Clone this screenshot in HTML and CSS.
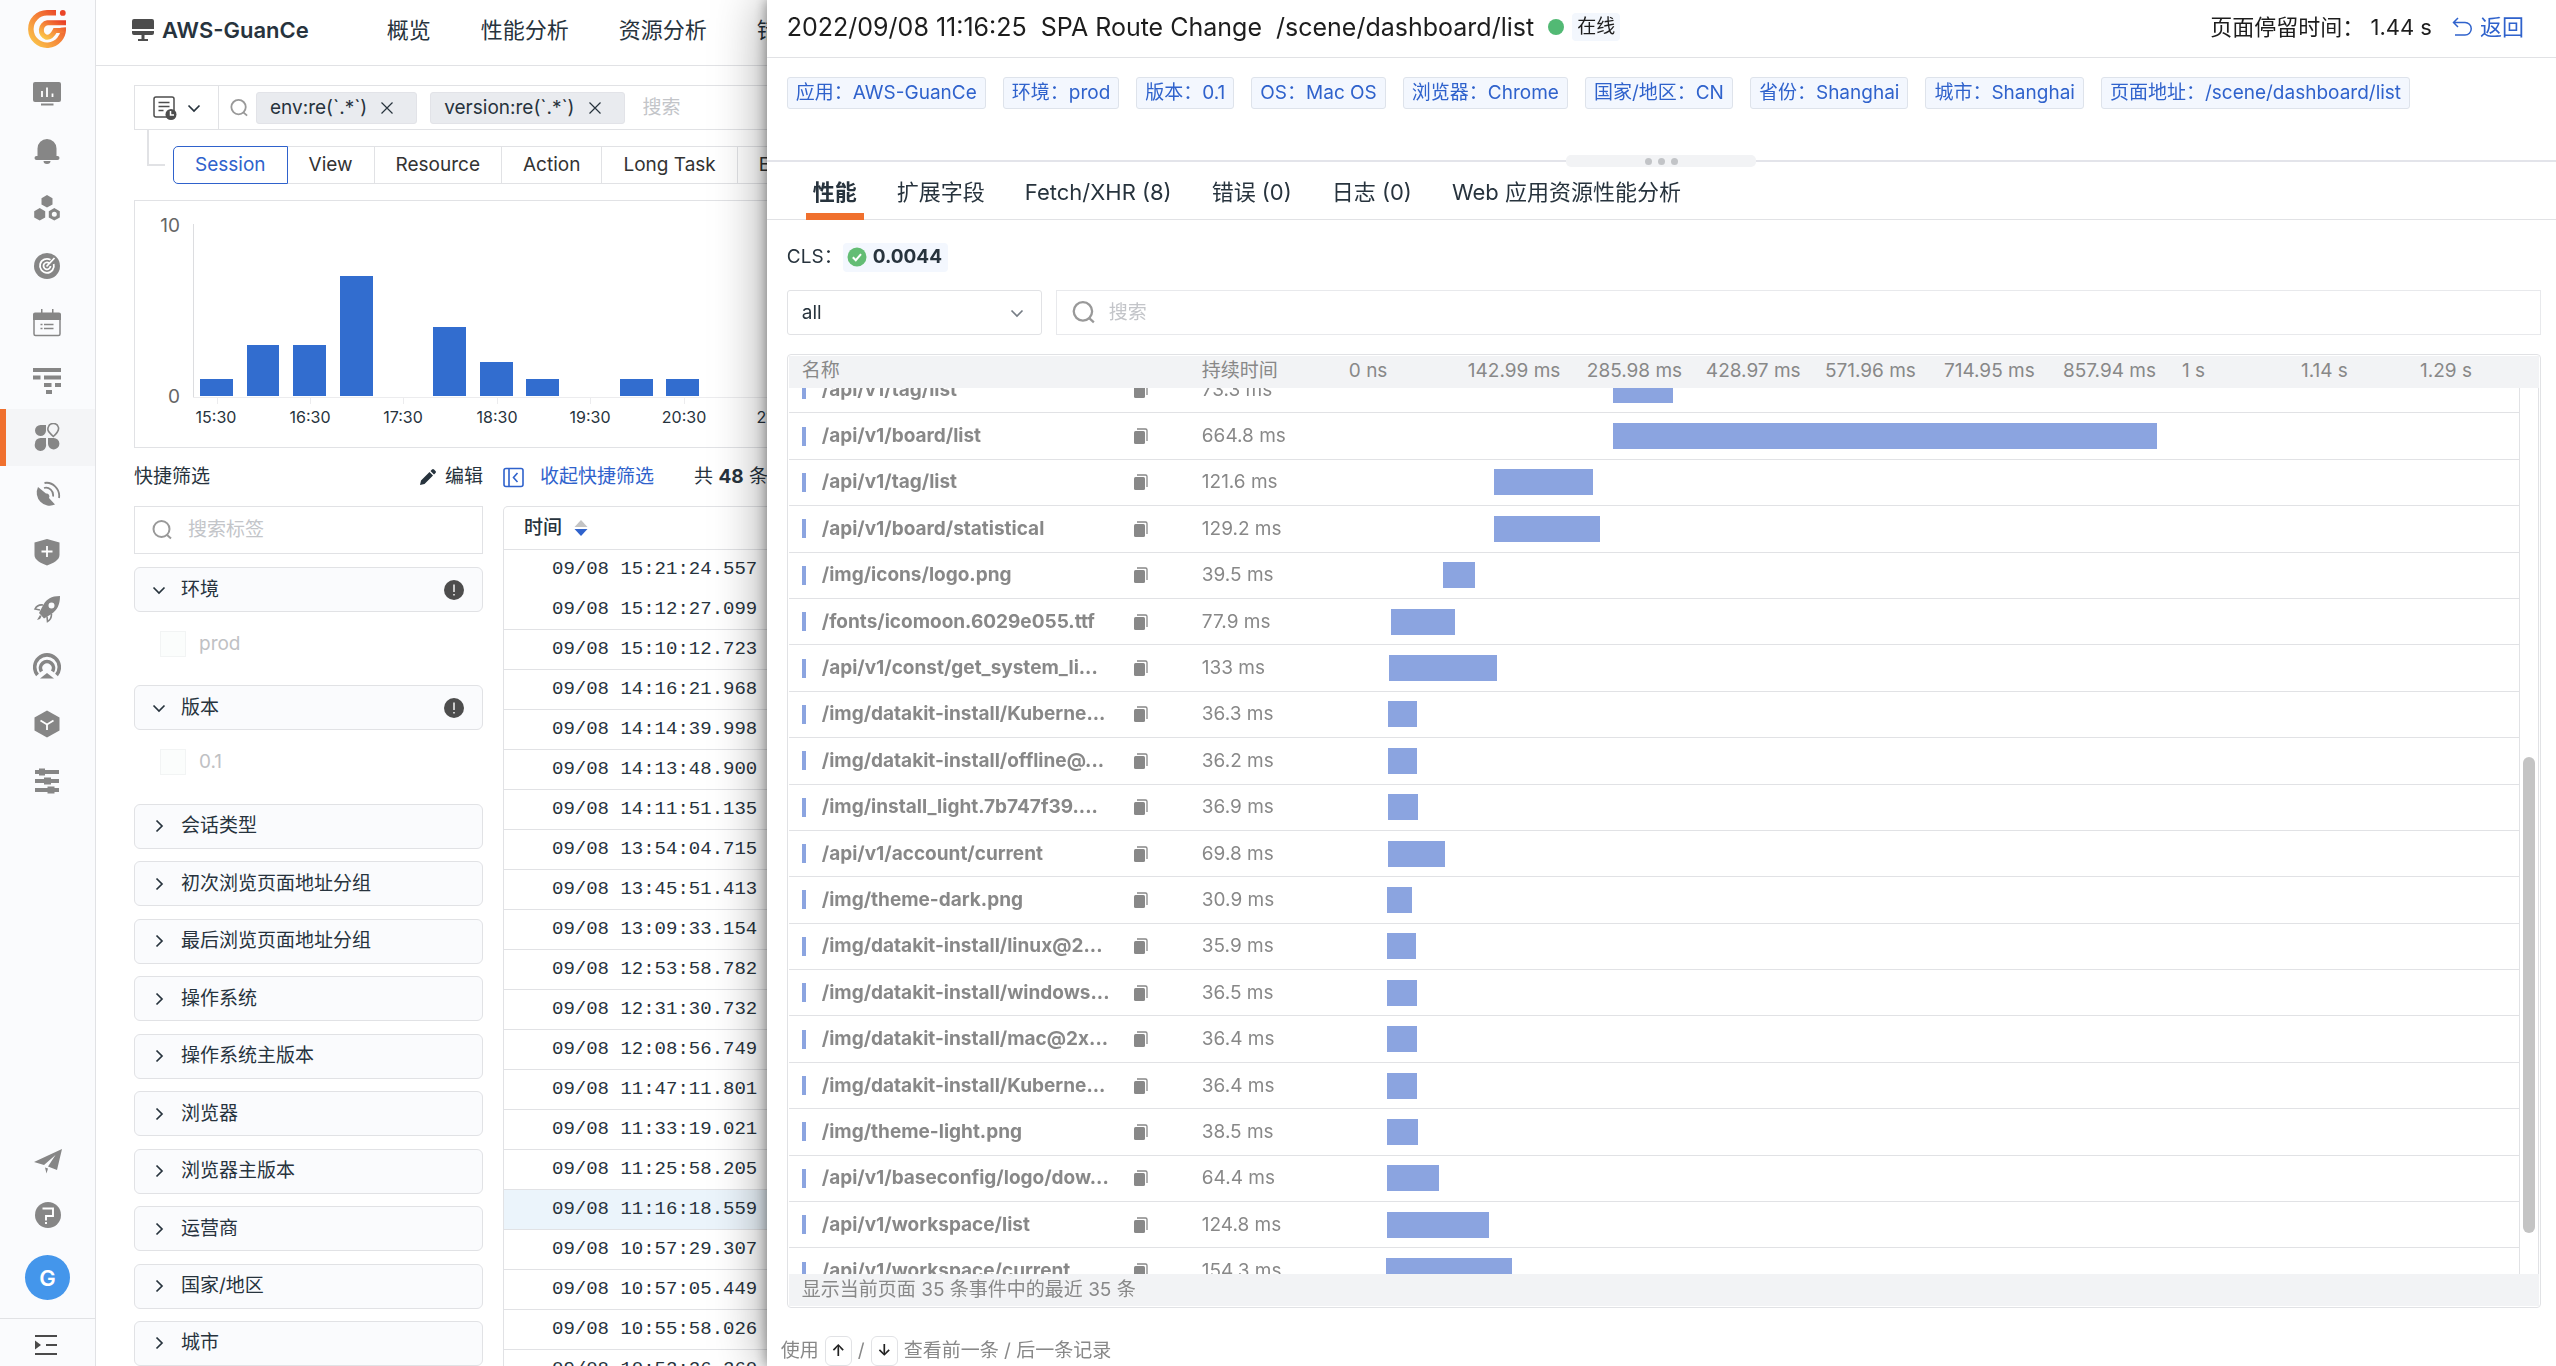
FILE: index.html
```html
<!DOCTYPE html>
<html lang="zh-CN">
<head>
<meta charset="utf-8">
<meta name="viewport" content="width=device-width, initial-scale=1">
<title>AWS-GuanCe</title>
<link rel="stylesheet" href="styles.css">
</head>
<body>
<svg class="defs" width="0" height="0" aria-hidden="true">
  <defs>
    <linearGradient id="brand" x1="0" y1="1" x2="1" y2="0">
      <stop offset="0" stop-color="#fbc94a"/><stop offset="0.5" stop-color="#f5873a"/><stop offset="1" stop-color="#e93f26"/>
    </linearGradient>
    <symbol id="i-search" viewBox="0 0 20 20"><circle cx="9.500" cy="9" r="8" fill="none" stroke="currentColor" stroke-width="2"/><path d="M14.500 14.500l4.500 4" fill="none" stroke="currentColor" stroke-width="2"/></symbol>
    <symbol id="i-right" viewBox="0 0 14 14"><path d="M4.500 1.500L10 7l-5.500 5.500" fill="none" stroke="currentColor" stroke-width="1.700"/></symbol>
    <symbol id="i-down" viewBox="0 0 14 14"><path d="M1.500 4.500L7 10l5.500-5.500" fill="none" stroke="currentColor" stroke-width="1.700"/></symbol>
    <symbol id="i-close" viewBox="0 0 12 12"><path d="M0.500 0.500l11 11M11.500 0.500l-11 11" fill="none" stroke="currentColor" stroke-width="1.200"/></symbol>
    <symbol id="i-warn" viewBox="0 0 20 20"><circle cx="10" cy="10" r="10" fill="#4d4d4d"/><path d="M10 4.500v7.500M10 14v1.600" stroke="#fff" stroke-width="1.400"/></symbol>
    <symbol id="i-copy" viewBox="0 0 14 16"><rect x="0" y="3" width="11" height="13" rx="1.500" fill="currentColor"/><path d="M3 1h8.500a1.500 1.500 0 0 1 1.500 1.500V13" fill="none" stroke="currentColor" stroke-width="1.300"/></symbol>
  </defs>
</svg>
<div class="app">
  <aside class="sidebar">
    <a class="logo" href="#" aria-label="GuanCe">
      <svg width="38" height="38" viewBox="0 0 38 38"><g fill="none" stroke="url(#brand)" stroke-width="5.500"><path d="M28 2.800H19A16.200 16.200 0 1 0 35.200 17.500"/><path d="M38 12.800H19.500a7.500 7.500 0 0 0-1 14.500c4 .5 6-2 8.500-6.700H36.500" stroke-width="5"/></g><circle cx="34.800" cy="2.900" r="2.900" fill="#ea4427"/></svg>
    </a>
    <nav class="side-nav">
      <a href="#" aria-label="场景"><svg width="28" height="28" viewBox="0 0 28 28"><rect x="0" y="2" width="28" height="20" rx="2" fill="currentColor"/><path d="M8 24.500h12.500" stroke="currentColor" stroke-width="2"/><path d="M9 11v6M14 7.500V17M19.500 13.500V17" stroke="#fff" stroke-width="1.800"/></svg></a>
      <a href="#" aria-label="事件"><svg width="28" height="28" viewBox="0 0 28 28"><path d="M4.500 19V11.500a9.500 9.500 0 0 1 19 0V19h1a2 2 0 0 1 0 4h-21a2 2 0 0 1 0-4zM10.500 24h7a3.500 3 0 0 1-7 0z" fill="currentColor"/></svg></a>
      <a href="#" aria-label="基础设施"><svg width="28" height="28" viewBox="0 0 28 28"><path d="M14 1l5.500 3.200v6.300L14 13.600l-5.500-3.100V4.200zM6.700 14l5.500 3.200v6.300l-5.500 3.100-5.500-3.100v-6.300z" fill="currentColor"/><path fill-rule="evenodd" d="M21.300 14l5.500 3.200v6.300l-5.500 3.100-5.500-3.100v-6.300zm0 3.800a2.500 2.500 0 1 0 0 5 2.500 2.500 0 0 0 0-5z" fill="currentColor"/></svg></a>
      <a href="#" aria-label="指标"><svg width="28" height="28" viewBox="0 0 28 28"><circle cx="14" cy="14" r="13" fill="currentColor"/><path d="M17.500 7.800a7 7 0 1 0 3.200 4.200M16 11a3.500 3.500 0 1 0 1.500 3M13.500 14.500L21.500 6" fill="none" stroke="#fff" stroke-width="1.800"/></svg></a>
      <a href="#" aria-label="日志"><svg width="28" height="28" viewBox="0 0 28 28"><path d="M0 5.500a2 2 0 0 1 2-2h24a2 2 0 0 1 2 2V11H0zM8 0h1.500v4H8zM19 0h1.500v4H19z" fill="currentColor"/><rect x="1" y="5" width="26" height="21.500" rx="1.500" fill="none" stroke="currentColor" stroke-width="1.500"/><path d="M7.500 15.500h2M11 15.500h9.500M7.500 19.500h2M11 19.500h9.500" stroke="currentColor" stroke-width="1.600"/></svg></a>
      <a href="#" aria-label="应用性能监测"><svg width="28" height="28" viewBox="0 0 28 28"><path d="M0 2h28v4H0zM0 9.500h7.500v4H0zM11 9.500h17v4H11zM11 17h7.500v4H11zM22 17h6v4h-6zM13 24h6v4h-6z" fill="currentColor"/></svg></a>
      <a href="#" class="is-active" aria-label="用户访问监测"><svg width="28" height="28" viewBox="0 0 28 28"><path d="M7.500 2H13v6a5.500 5.500 0 1 1-5.500-6zM2 20.500A5.500 5.500 0 0 1 7.500 15H13v6a5.700 5.700 0 1 1-11-.5zM15 15h5.500a5.700 5.700 0 1 1-5.500 6z" fill="currentColor"/><path d="M20.300 13.500c-6-5.500-6-7-5-9.500a5.300 5.300 0 0 1 10 0c1 2.500 0 5-5 9.500z" fill="none" stroke="currentColor" stroke-width="1.600"/></svg></a>
      <a href="#" aria-label="可用性监测"><svg width="28" height="28" viewBox="0 0 28 28"><path d="M5 6l8 6.500a3 3 0 0 1 3 4.500l6 6.500A13 13 0 0 1 5 6z" fill="currentColor"/><path d="M11 7c5-1.500 10 3 9 8.500M11.500 2c8-1.500 16 6 14.500 15" fill="none" stroke="currentColor" stroke-width="1.800"/></svg></a>
      <a href="#" aria-label="安全巡检"><svg width="28" height="28" viewBox="0 0 28 28"><path d="M14 1l12.500 3.500V17c0 5-6 8-12.500 10.500C7.500 25 1.500 22 1.500 17V4.500z" fill="currentColor"/><path d="M14 8v11M8.500 13.500h11" stroke="#fff" stroke-width="1.800"/></svg></a>
      <a href="#" aria-label="可用性"><svg width="28" height="28" viewBox="0 0 28 28"><path fill-rule="evenodd" d="M27 1c-9 0-13 3-16.500 8.500L6 18l5 5.500L18.500 19C24 15 27 10 27 1zm-8.500 6.500a3 3 0 1 1 0 6 3 3 0 0 1 0-6z" fill="currentColor"/><path d="M10 10c-4-.5-6.500 1-8 4l5 1M18.500 19c0 3-1 6-4 7.500L14 21.500" fill="none" stroke="currentColor" stroke-width="1.600"/><path d="M7 20l-3 5 3-1 1.500-2.500z" fill="currentColor"/></svg></a>
      <a href="#" aria-label="监控"><svg width="28" height="28" viewBox="0 0 28 28"><path d="M4.500 22a12.300 12.300 0 1 1 19 0M8.500 18.500a6.500 6.500 0 1 1 11 0" fill="none" stroke="currentColor" stroke-width="3.600"/><path d="M14 20l7 5.500H7z" fill="currentColor"/></svg></a>
      <a href="#" aria-label="集成"><svg width="28" height="28" viewBox="0 0 28 28"><path d="M14 0.500l12.500 7v13L14 27.500l-12.500-7v-13z" fill="currentColor"/><path d="M7.500 10.500L14 14.500l6.500-4M14 14.500v5.500" fill="none" stroke="#fff" stroke-width="1.800"/></svg></a>
      <a href="#" aria-label="管理"><svg width="28" height="28" viewBox="0 0 28 28"><path d="M2 3h4V1.500h6V3h14v4H12v1.500H6V7H2zM2 12h9v-1.500h7V12h8v4h-8v1.500h-7V16H2zM2 21h12.500v-1.500h7V21H26v4h-4.500v1.500h-7V25H2z" fill="currentColor"/></svg></a>
    </nav>
    <div class="side-bottom">
      <a href="#" aria-label="邀请"><svg width="28" height="28" viewBox="0 0 28 28"><path d="M0 15L28 2l-5 21-9-3.500L21.500 8 10 18zM11 20.500l3 1-1.500 5z" fill="currentColor"/></svg></a>
      <a href="#" aria-label="帮助"><svg width="28" height="28" viewBox="0 0 28 28"><circle cx="14" cy="14" r="13" fill="currentColor"/><path d="M8.500 7.500h10.500v7.500h-7v4.500M12 21v2" fill="none" stroke="#fff" stroke-width="1.900"/></svg></a>
      <button class="avatar" type="button">G</button>
    </div>
    <button class="collapse" type="button" aria-label="展开"><svg width="22" height="22" viewBox="0 0 22 22"><path d="M0 2h22M11 11h11M0 20h22" stroke="#4a4a4a" stroke-width="2"/><path d="M0 6.500L6 11l-6 4.500z" fill="#4a4a4a"/></svg></button>
  </aside>

  <main class="main">
    <header class="topbar">
      <svg width="22" height="22" viewBox="0 0 22 22"><path d="M2 0h18a2 2 0 0 1 2 2v8H0V2a2 2 0 0 1 2-2zM0 12h22v2a2 2 0 0 1-2 2h-7.500v4H16v2H6v-2h3.500v-4H2a2 2 0 0 1-2-2z" fill="#4d4d4d"/></svg>
      <h1 class="app-name">AWS-GuanCe</h1>
      <nav class="top-nav"><a href="#">概览</a><a href="#">性能分析</a><a href="#">资源分析</a><a href="#">错误分析</a></nav>
    </header>

    <div class="content">
      <div class="query">
        <button class="query-type" type="button" aria-label="快照">
          <svg width="24" height="24" viewBox="0 0 24 24"><rect x="1" y="1" width="20" height="20" rx="2" fill="none" stroke="#4d4d4d" stroke-width="1.500"/><path d="M5.500 6.500h11M5.500 10.500h11M5.500 14.500h5" stroke="#4d4d4d" stroke-width="1.500"/><circle cx="18" cy="18.500" r="5.500" fill="#4d4d4d"/><path d="M17.500 15v4h3.500" fill="none" stroke="#fff" stroke-width="1.500"/></svg>
          <svg width="14" height="14"><use href="#i-down"/></svg>
        </button>
        <svg class="query-icon" width="18" height="18"><use href="#i-search"/></svg>
        <span class="chip">env:re(`.*`)<button type="button" aria-label="移除"><svg width="12" height="12"><use href="#i-close"/></svg></button></span>
        <span class="chip">version:re(`.*`)<button type="button" aria-label="移除"><svg width="12" height="12"><use href="#i-close"/></svg></button></span>
        <input class="query-input" type="text" placeholder="搜索" aria-label="搜索">
      </div>

      <div class="types">
        <span class="branch"></span>
        <div class="type-tabs">
          <button type="button" class="is-on">Session</button><button type="button">View</button><button type="button">Resource</button><button type="button">Action</button><button type="button">Long Task</button><button type="button">Error</button>
        </div>
      </div>

      <section class="chart">
        <svg width="100%" height="246">
          <g class="axis"><path d="M58.500 23v173"/><path d="M58 196.500H2240" class="faint"/><path d="M82.500 197v6M175.500 197v6M268.500 197v6M362.500 197v6M455.500 197v6M549.500 197v6" class="faint"/></g>
          <g class="y-label"><text x="45" y="31">10</text><text x="45" y="202">0</text></g>
          <g class="bars"><rect x="65" y="178" width="33" height="17"/><rect x="112" y="144" width="32" height="51"/><rect x="158" y="144" width="33" height="51"/><rect x="205" y="75" width="33" height="120"/><rect x="298" y="126" width="33" height="69"/><rect x="345" y="161" width="33" height="34"/><rect x="391" y="178" width="33" height="17"/><rect x="485" y="178" width="33" height="17"/><rect x="531" y="178" width="33" height="17"/></g>
          <g class="x-label"><text x="81" y="222">15:30</text><text x="175" y="222">16:30</text><text x="268" y="222">17:30</text><text x="362" y="222">18:30</text><text x="455" y="222">19:30</text><text x="549" y="222">20:30</text><text x="642" y="222">21:30</text></g>
        </svg>
      </section>

      <div class="panes">
        <section class="filters">
          <div class="pane-head">
            <span class="grow">快捷筛选</span>
            <button type="button" class="edit"><svg width="16" height="16" viewBox="0 0 16 16"><path d="M0 16l1-4.500L9.500 3 13 6.500 4.500 15zM10.500 2L12 .5a1.500 1.500 0 0 1 2 0L15.500 2a1.500 1.500 0 0 1 0 2L14 5.500z" fill="currentColor"/></svg>编辑</button>
          </div>
          <label class="filter-search"><svg width="20" height="20"><use href="#i-search"/></svg><input type="text" placeholder="搜索标签" aria-label="搜索标签"></label>
          <div class="filter-list">
            <div class="group">
              <button type="button" class="group-head"><svg width="14" height="14"><use href="#i-down"/></svg><span class="grow">环境</span><svg width="20" height="20"><use href="#i-warn"/></svg></button>
              <label class="option"><input type="checkbox" disabled>prod</label>
            </div>
            <div class="group">
              <button type="button" class="group-head"><svg width="14" height="14"><use href="#i-down"/></svg><span class="grow">版本</span><svg width="20" height="20"><use href="#i-warn"/></svg></button>
              <label class="option"><input type="checkbox" disabled>0.1</label>
            </div>
            <button type="button" class="group-head"><svg width="14" height="14"><use href="#i-right"/></svg>会话类型</button>
            <button type="button" class="group-head"><svg width="14" height="14"><use href="#i-right"/></svg>初次浏览页面地址分组</button>
            <button type="button" class="group-head"><svg width="14" height="14"><use href="#i-right"/></svg>最后浏览页面地址分组</button>
            <button type="button" class="group-head"><svg width="14" height="14"><use href="#i-right"/></svg>操作系统</button>
            <button type="button" class="group-head"><svg width="14" height="14"><use href="#i-right"/></svg>操作系统主版本</button>
            <button type="button" class="group-head"><svg width="14" height="14"><use href="#i-right"/></svg>浏览器</button>
            <button type="button" class="group-head"><svg width="14" height="14"><use href="#i-right"/></svg>浏览器主版本</button>
            <button type="button" class="group-head"><svg width="14" height="14"><use href="#i-right"/></svg>运营商</button>
            <button type="button" class="group-head"><svg width="14" height="14"><use href="#i-right"/></svg>国家/地区</button>
            <button type="button" class="group-head"><svg width="14" height="14"><use href="#i-right"/></svg>城市</button>
          </div>
        </section>

        <section class="sessions">
          <div class="pane-head">
            <button type="button" class="fold"><svg width="21" height="21" viewBox="0 0 21 21"><rect x="1" y="1.500" width="19" height="18" rx="2" fill="none" stroke="currentColor" stroke-width="1.600"/><path d="M6 2v17M14.500 6l-4 4.500 4 4.500" fill="none" stroke="currentColor" stroke-width="1.600"/></svg>收起快捷筛选</button>
            <span>共 <b>48</b> 条</span>
          </div>
          <div class="session-box">
            <table class="session-table">
              <thead><tr><th scope="col"><span class="sort">时间<svg width="14" height="18" viewBox="0 0 14 18"><path d="M7 1l6.500 7H.5z" fill="#c4c4c4"/><path d="M7 17L.5 10h13z" fill="#2f62cc"/></svg></span></th></tr></thead>
              <tbody>
                <tr class="plain"><td>09/08 15:21:24.557</td></tr>
                <tr><td>09/08 15:12:27.099</td></tr>
                <tr><td>09/08 15:10:12.723</td></tr>
                <tr><td>09/08 14:16:21.968</td></tr>
                <tr><td>09/08 14:14:39.998</td></tr>
                <tr><td>09/08 14:13:48.900</td></tr>
                <tr><td>09/08 14:11:51.135</td></tr>
                <tr><td>09/08 13:54:04.715</td></tr>
                <tr><td>09/08 13:45:51.413</td></tr>
                <tr><td>09/08 13:09:33.154</td></tr>
                <tr><td>09/08 12:53:58.782</td></tr>
                <tr><td>09/08 12:31:30.732</td></tr>
                <tr><td>09/08 12:08:56.749</td></tr>
                <tr><td>09/08 11:47:11.801</td></tr>
                <tr><td>09/08 11:33:19.021</td></tr>
                <tr><td>09/08 11:25:58.205</td></tr>
                <tr class="is-current"><td>09/08 11:16:18.559</td></tr>
                <tr><td>09/08 10:57:29.307</td></tr>
                <tr><td>09/08 10:57:05.449</td></tr>
                <tr><td>09/08 10:55:58.026</td></tr>
                <tr><td>09/08 10:52:26.260</td></tr>
              </tbody>
            </table>
          </div>
        </section>
      </div>
    </div>
  </main>
</div>

<section class="drawer" role="dialog" aria-label="View">
  <header class="drawer-head">
    <h2 class="drawer-title"><span>2022/09/08 11:16:25</span><span>SPA Route Change</span><span>/scene/dashboard/list</span></h2>
    <span class="dot"></span><span class="status">在线</span>
    <span class="stay">页面停留时间： 1.44 s</span>
    <a class="back" href="#"><svg width="20" height="20" viewBox="0 0 20 20"><path d="M6 1L1.500 5.500 6 10M2 5.500h11a6 6 0 0 1 0 12.500H3" fill="none" stroke="currentColor" stroke-width="1.500"/></svg>返回</a>
  </header>
  <div class="tags"><span>应用：AWS-GuanCe</span><span>环境：prod</span><span>版本：0.1</span><span>OS：Mac OS</span><span>浏览器：Chrome</span><span>国家/地区：CN</span><span>省份：Shanghai</span><span>城市：Shanghai</span><span>页面地址：/scene/dashboard/list</span></div>
  <div class="splitter"><span class="grip"><i></i><i></i><i></i></span></div>
  <nav class="drawer-tabs">
    <a href="#" class="is-on">性能</a><a href="#">扩展字段</a><a href="#">Fetch/XHR (8)</a><a href="#">错误 (0)</a><a href="#">日志 (0)</a><a href="#">Web 应用资源性能分析</a>
  </nav>
  <div class="metric">CLS：<span class="score"><svg width="20" height="20" viewBox="0 0 20 20"><circle cx="10" cy="10" r="9.500" fill="#63bd74"/><path d="M5.800 10.200l3 3 5.200-6" fill="none" stroke="#fff" stroke-width="2"/></svg>0.0044</span></div>
  <div class="tools">
    <div class="select"><select aria-label="类型"><option>all</option></select><svg width="14" height="14"><use href="#i-down"/></svg></div>
    <label class="find"><svg width="23" height="23"><use href="#i-search"/></svg><input type="text" placeholder="搜索" aria-label="搜索资源"></label>
  </div>

  <div class="waterfall">
    <div class="wf-head"><span class="c-name">名称</span><span class="c-time">持续时间</span><div class="scale"><span>0 ns</span><span>142.99 ms</span><span>285.98 ms</span><span>428.97 ms</span><span>571.96 ms</span><span>714.95 ms</span><span>857.94 ms</span><span>1 s</span><span>1.14 s</span><span>1.29 s</span></div></div>
    <div class="wf-body">
      <div class="wf-view">
        <table class="wf-table">
          <colgroup><col class="w-name"><col class="w-time"><col></colgroup>
          <tbody>
            <tr><td><span class="res"><b>/api/v1/tag/list</b><svg width="14" height="16"><use href="#i-copy"/></svg></span></td><td>73.3 ms</td><td><div class="bar" style="margin-left:22.560%;width:5.130%"></div></td></tr>
            <tr><td><span class="res"><b>/api/v1/board/list</b><svg width="14" height="16"><use href="#i-copy"/></svg></span></td><td>664.8 ms</td><td><div class="bar" style="margin-left:22.560%;width:46.500%"></div></td></tr>
            <tr><td><span class="res"><b>/api/v1/tag/list</b><svg width="14" height="16"><use href="#i-copy"/></svg></span></td><td>121.6 ms</td><td><div class="bar" style="margin-left:12.400%;width:8.500%"></div></td></tr>
            <tr><td><span class="res"><b>/api/v1/board/statistical</b><svg width="14" height="16"><use href="#i-copy"/></svg></span></td><td>129.2 ms</td><td><div class="bar" style="margin-left:12.400%;width:9.040%"></div></td></tr>
            <tr><td><span class="res"><b>/img/icons/logo.png</b><svg width="14" height="16"><use href="#i-copy"/></svg></span></td><td>39.5 ms</td><td><div class="bar" style="margin-left:8.030%;width:2.760%"></div></td></tr>
            <tr><td><span class="res"><b>/fonts/icomoon.6029e055.ttf</b><svg width="14" height="16"><use href="#i-copy"/></svg></span></td><td>77.9 ms</td><td><div class="bar" style="margin-left:3.600%;width:5.450%"></div></td></tr>
            <tr><td><span class="res"><b>/api/v1/const/get_system_li...</b><svg width="14" height="16"><use href="#i-copy"/></svg></span></td><td>133 ms</td><td><div class="bar" style="margin-left:3.400%;width:9.300%"></div></td></tr>
            <tr><td><span class="res"><b>/img/datakit-install/Kuberne...</b><svg width="14" height="16"><use href="#i-copy"/></svg></span></td><td>36.3 ms</td><td><div class="bar" style="margin-left:3.330%;width:2.540%"></div></td></tr>
            <tr><td><span class="res"><b>/img/datakit-install/offline@...</b><svg width="14" height="16"><use href="#i-copy"/></svg></span></td><td>36.2 ms</td><td><div class="bar" style="margin-left:3.330%;width:2.530%"></div></td></tr>
            <tr><td><span class="res"><b>/img/install_light.7b747f39....</b><svg width="14" height="16"><use href="#i-copy"/></svg></span></td><td>36.9 ms</td><td><div class="bar" style="margin-left:3.330%;width:2.580%"></div></td></tr>
            <tr><td><span class="res"><b>/api/v1/account/current</b><svg width="14" height="16"><use href="#i-copy"/></svg></span></td><td>69.8 ms</td><td><div class="bar" style="margin-left:3.330%;width:4.880%"></div></td></tr>
            <tr><td><span class="res"><b>/img/theme-dark.png</b><svg width="14" height="16"><use href="#i-copy"/></svg></span></td><td>30.9 ms</td><td><div class="bar" style="margin-left:3.250%;width:2.160%"></div></td></tr>
            <tr><td><span class="res"><b>/img/datakit-install/linux@2...</b><svg width="14" height="16"><use href="#i-copy"/></svg></span></td><td>35.9 ms</td><td><div class="bar" style="margin-left:3.250%;width:2.510%"></div></td></tr>
            <tr><td><span class="res"><b>/img/datakit-install/windows...</b><svg width="14" height="16"><use href="#i-copy"/></svg></span></td><td>36.5 ms</td><td><div class="bar" style="margin-left:3.250%;width:2.550%"></div></td></tr>
            <tr><td><span class="res"><b>/img/datakit-install/mac@2x...</b><svg width="14" height="16"><use href="#i-copy"/></svg></span></td><td>36.4 ms</td><td><div class="bar" style="margin-left:3.250%;width:2.550%"></div></td></tr>
            <tr><td><span class="res"><b>/img/datakit-install/Kuberne...</b><svg width="14" height="16"><use href="#i-copy"/></svg></span></td><td>36.4 ms</td><td><div class="bar" style="margin-left:3.250%;width:2.550%"></div></td></tr>
            <tr><td><span class="res"><b>/img/theme-light.png</b><svg width="14" height="16"><use href="#i-copy"/></svg></span></td><td>38.5 ms</td><td><div class="bar" style="margin-left:3.250%;width:2.690%"></div></td></tr>
            <tr><td><span class="res"><b>/api/v1/baseconfig/logo/dow...</b><svg width="14" height="16"><use href="#i-copy"/></svg></span></td><td>64.4 ms</td><td><div class="bar" style="margin-left:3.250%;width:4.500%"></div></td></tr>
            <tr><td><span class="res"><b>/api/v1/workspace/list</b><svg width="14" height="16"><use href="#i-copy"/></svg></span></td><td>124.8 ms</td><td><div class="bar" style="margin-left:3.250%;width:8.730%"></div></td></tr>
            <tr><td><span class="res"><b>/api/v1/workspace/current</b><svg width="14" height="16"><use href="#i-copy"/></svg></span></td><td>154.3 ms</td><td><div class="bar" style="margin-left:3.160%;width:10.790%"></div></td></tr>
          </tbody>
        </table>
      </div>
      <div class="rail"><span class="thumb"></span></div>
    </div>
    <div class="wf-foot">显示当前页面 35 条事件中的最近 35 条</div>
  </div>
  <footer class="hint">使用 <kbd>↑</kbd> / <kbd>↓</kbd> 查看前一条 / 后一条记录</footer>
</section>
</body>
</html>
```
FILE: styles.css
```css
* { box-sizing: border-box; }
:root {
  --ink: #27333d;
  --line: #e1e2e5;
  --blue: #2f62cc;
  --muted: #888;
  --orange: #f0702e;
}
body {
  margin: 0;
  overflow: hidden;
  background: #fff;
  color: var(--ink);
  font: 19px/28px Inter, "Noto Sans CJK SC", sans-serif;
}
button, input, select { margin: 0; padding: 0; border: 0; background: none; color: inherit; font: inherit; }
input { outline: 0; min-width: 0; }
input::placeholder { color: #c3c5c9; opacity: 1; }
a { color: inherit; text-decoration: none; }
svg { display: block; flex: none; }
h1, h2 { margin: 0; }
.defs { position: absolute; }
.grow { flex: 1; text-align: left; }

.app { display: flex; height: 100vh; }

/* sidebar */
.sidebar {
  display: flex;
  flex-direction: column;
  flex: none;
  width: 96px;
  border-right: 1px solid var(--line);
  background: #fafbfd;
  color: #868686;
}
.logo { padding: 10px 0 17px 28px; }
.side-nav { display: grid; grid-auto-rows: 1fr; height: 745px; }
.side-nav a { display: flex; align-items: center; padding-left: 33px; }
.side-nav .is-active { padding-left: 27px; border-left: 6px solid var(--orange); background: #f4f5f7; }
.side-bottom { display: flex; flex: 1; flex-direction: column; align-items: center; justify-content: flex-end; gap: 26px; padding-bottom: 18px; }
.avatar { width: 45px; height: 45px; border-radius: 50%; background: #4496eb; color: #fff; font-size: 22px; font-weight: 600; }
.collapse { display: flex; align-items: center; height: 48px; padding: 4px 0 0 35px; border-top: 1px solid var(--line); }

/* page behind the drawer */
.main { display: flex; flex: 1; flex-direction: column; min-width: 0; }
.topbar { display: flex; flex: none; align-items: center; height: 66px; padding: 0 0 6px 36px; border-bottom: 1px solid var(--line); }
.app-name { margin-left: 8px; font-size: 22px; font-weight: 600; line-height: 28px; }
.top-nav { display: flex; gap: 50px; margin-left: 78px; font-size: 22px; }
.content { display: flex; flex: 1; flex-direction: column; min-height: 0; padding: 19px 20px 0 38px; }

.query { display: flex; flex: none; align-items: center; height: 45px; border: 1px solid var(--line); }
.query-type { display: flex; align-items: center; gap: 10px; align-self: stretch; width: 84px; padding-left: 18px; border-right: 1px solid var(--line); }
.query-icon { margin: 0 8px 0 11px; color: #999; }
.chip { display: flex; align-items: center; height: 32px; margin-right: 13px; padding: 0 23px 0 13px; border: 1px solid #e2e3e8; border-radius: 3px; background: #e9ebef; }
.chip button { margin-left: 14px; }
.query-input { flex: 1; padding-left: 5px; }

.types { display: flex; flex: none; gap: 8px; height: 70px; padding-left: 13px; }
.branch { width: 18px; height: 36px; border: 2px solid var(--line); border-width: 0 0 2px 2px; }
.type-tabs { display: flex; height: 38px; margin-top: 16px; }
.type-tabs button { padding: 0 21px; border: 1px solid var(--line); border-left: 0; color: #333; }
.type-tabs .is-on { border: 1px solid var(--blue); border-radius: 5px 0 0 5px; color: var(--blue); }

.chart { flex: none; height: 248px; border: 1px solid var(--line); }
.axis path { stroke: #dcdde0; }
.axis .faint { stroke: #ececee; }
.bars { fill: #326dcf; }
.y-label { fill: #666; font-size: 19px; text-anchor: end; }
.x-label { fill: var(--ink); font-size: 16px; text-anchor: middle; }

.panes { display: flex; flex: 1; gap: 20px; min-height: 0; }
.pane-head { display: flex; flex: none; align-items: center; height: 58px; }
.edit { display: flex; align-items: center; gap: 9px; }
.filters { display: flex; flex: none; flex-direction: column; width: 349px; }
.filter-search { display: flex; flex: none; align-items: center; gap: 16px; height: 48px; padding: 0 17px; border: 1px solid var(--line); }
.filter-search svg, .find svg { color: #999; }
.filter-list { display: flex; flex: 1; flex-direction: column; justify-content: space-between; margin-top: 13px; }
.group { height: 106px; }
.group-head { display: flex; flex: none; align-items: center; gap: 15px; width: 100%; height: 45px; padding: 0 18px 0 17px; border: 1px solid var(--line); border-radius: 6px; background: #fafbfd; }
.option { display: flex; align-items: center; gap: 13px; padding: 18px 0 0 26px; color: #bfc1c4; }
.option input { width: 26px; height: 26px; border: 1px solid #f2f4f4; background: #fbfdfc; appearance: none; }

.sessions { display: flex; flex: 1; flex-direction: column; min-width: 0; }
.fold { display: flex; align-items: center; gap: 16px; margin-right: 40px; color: var(--blue); }
.session-box { flex: 1; min-height: 0; overflow: hidden; border: 1px solid var(--line); border-bottom: 0; border-radius: 5px 5px 0 0; }
.session-table { width: 100%; border-collapse: collapse; }
.session-table th { height: 42px; padding: 0 20px; border-bottom: 1px solid var(--line); font-weight: 500; text-align: left; }
.sort { display: flex; align-items: center; gap: 12px; }
.session-table td { height: 40px; padding: 0 48px; border-bottom: 1px solid var(--line); font-family: "Liberation Mono", monospace; }
.session-table .plain td { border-bottom: 0; }
.session-table .is-current { background: #ebf4fb; }

/* drawer */
.drawer {
  position: fixed;
  top: 0;
  right: 0;
  bottom: 0;
  display: flex;
  flex-direction: column;
  width: 70%;
  background: #fff;
  box-shadow: 0 0 12px rgba(0, 0, 0, 0.4), 0 0 50px rgba(0, 0, 0, 0.4);
}
.drawer-head { display: flex; flex: none; align-items: center; height: 58px; padding: 0 32px 4px 20px; border-bottom: 1px solid var(--line); color: #1d1d1d; font-size: 22px; }
.drawer-title { display: flex; gap: 14px; font-size: 25px; font-weight: 400; }
.dot { width: 16px; height: 16px; margin: 0 8px 0 14px; border-radius: 50%; background: #52b974; }
.status { padding: 0 5px; border-radius: 4px; background: #f3f7fd; font-size: 19px; }
.stay { margin-left: auto; }
.back { display: flex; align-items: center; gap: 8px; margin-left: 20px; color: var(--blue); }

.tags { display: flex; flex: none; flex-wrap: wrap; gap: 17px; min-height: 97px; padding: 19px 20px 0; }
.tags span { height: 32px; padding: 0 8px; border: 1px solid #dee3eb; border-radius: 3px; background: #f3f7fe; color: var(--blue); line-height: 30px; }
.splitter { display: flex; flex: none; align-items: center; height: 12px; }
.splitter::before, .splitter::after { flex: 1; height: 2px; background: #e3e4ea; content: ""; }
.grip { display: flex; align-items: center; justify-content: center; gap: 6px; width: 190px; height: 12px; border-radius: 5px; background: #f2f3f5; }
.grip i { width: 7px; height: 7px; border-radius: 50%; background: #c2c4c7; }

.drawer-tabs { display: flex; flex: none; gap: 26px; height: 53px; padding-left: 39px; border-bottom: 1px solid var(--line); font-size: 22px; }
.drawer-tabs a { height: 53px; padding: 11px 7px 0; }
.drawer-tabs .is-on { border-bottom: 7px solid var(--orange); font-weight: 700; }

.metric { display: flex; flex: none; align-items: center; height: 70px; padding: 4px 20px 0; }
.score { display: flex; align-items: center; gap: 6px; height: 29px; padding: 0 6px 0 4px; border-radius: 4px; background: #f3f7fe; font-weight: 700; }

.tools { display: flex; flex: none; gap: 14px; height: 45px; padding: 0 15px 0 20px; }
.select { display: grid; align-items: center; width: 255px; border: 1px solid var(--line); border-radius: 3px; }
.select > * { grid-area: 1 / 1; }
.select select { height: 43px; padding-left: 14px; appearance: none; }
.select svg { justify-self: end; margin-right: 17px; color: #767d85; pointer-events: none; }
.find { display: flex; flex: 1; align-items: center; gap: 14px; padding-left: 15px; border: 1px solid #e8e9ec; }
.find input { flex: 1; }

.waterfall { display: flex; flex: 1; flex-direction: column; min-height: 0; margin: 19px 15px 0 20px; padding: 1px; border: 1px solid var(--line); border-radius: 4px; color: var(--muted); }
.wf-head { display: flex; flex: none; height: 32px; padding-left: 13px; background: #f2f3f5; line-height: 30px; }
.c-name { width: 400px; }
.c-time { width: 147px; }
.scale { display: grid; flex: 1; grid-template-columns: repeat(10, 1fr); white-space: nowrap; }
.wf-body { display: flex; flex: 1; min-height: 0; overflow: hidden; }
.wf-view { flex: 1; }
.wf-table { width: 100%; height: 928px; margin-top: -21px; border-collapse: separate; border-spacing: 0; table-layout: fixed; }
.w-name { width: 413px; }
.w-time { width: 147px; }
.wf-table td { padding: 0; border-bottom: 1px solid var(--line); }
.res { display: flex; align-items: center; width: 346px; margin-left: 13px; }
.res::before { width: 4px; height: 19px; margin-right: 16px; background: #8ba4e0; content: ""; }
.res b { flex: 1; font-weight: 700; white-space: nowrap; }
.bar { height: 26px; background: #8ba4e0; }
.rail { width: 20px; padding: 369px 3px 0; border: 1px solid var(--line); border-width: 0 1px; }
.thumb { display: block; width: 12px; height: 476px; border-radius: 6px; background: #c4c4c4; }
.wf-foot { flex: none; height: 32px; padding-left: 13px; background: #f2f3f5; line-height: 32px; }

.hint { display: flex; flex: none; align-items: center; gap: 6px; height: 58px; padding: 28px 0 0 14px; color: var(--muted); }
kbd { width: 27px; height: 30px; border: 1px solid var(--line); border-radius: 6px; color: #222; font: 600 16px/26px Inter, sans-serif; text-align: center; }
```
